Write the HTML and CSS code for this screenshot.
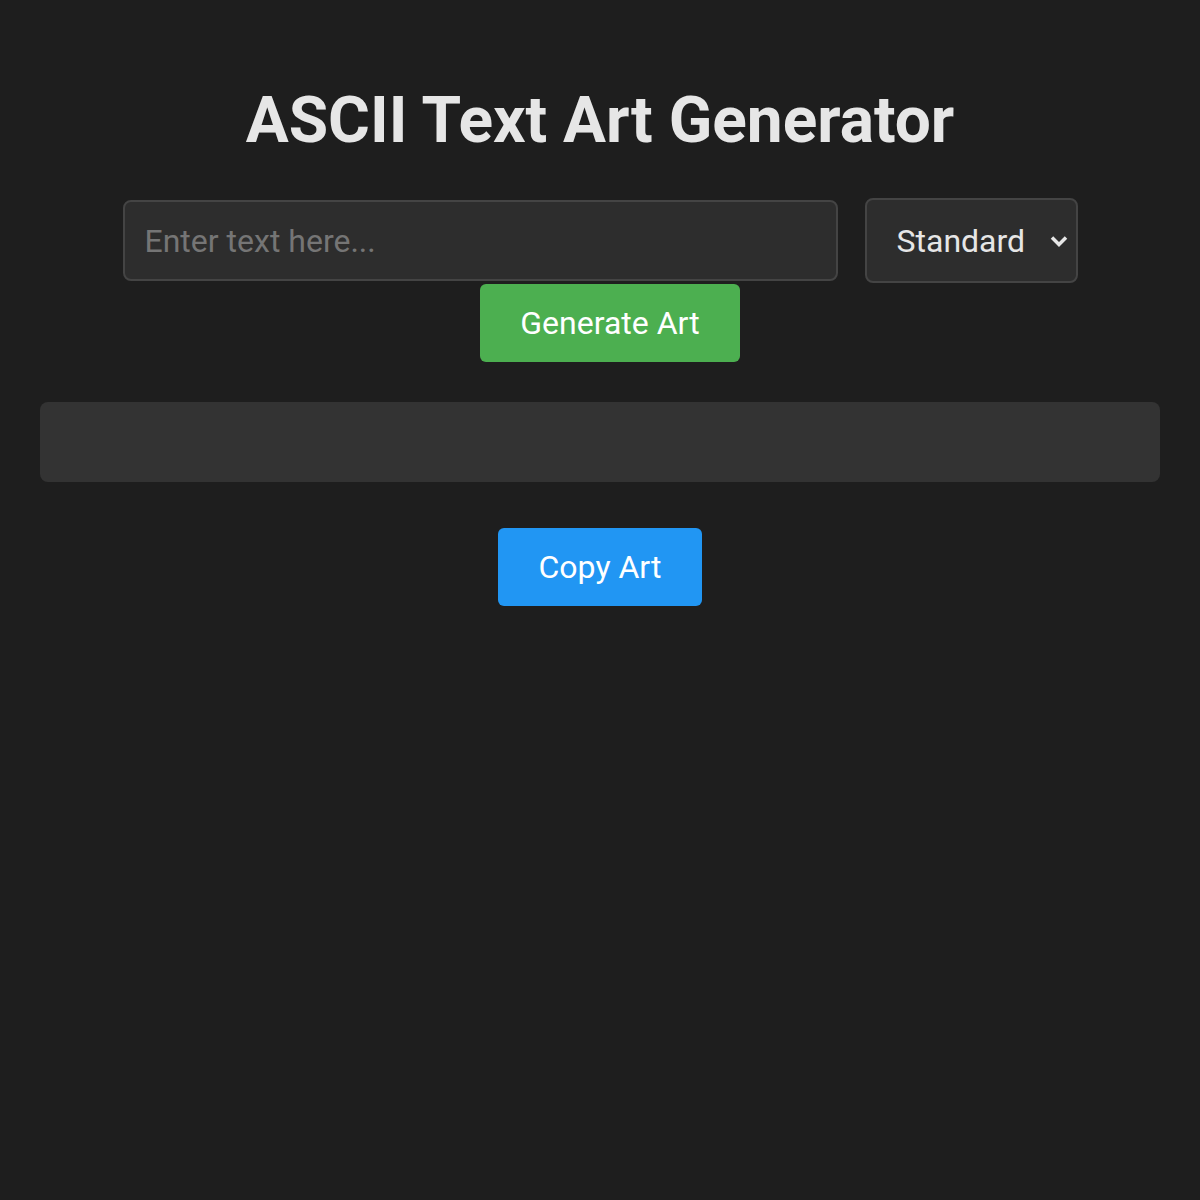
FILE: index.html
```html
<!DOCTYPE html>
<html lang="en">
<head>
    <meta charset="UTF-8">
    <meta name="viewport" content="width=device-width, initial-scale=1.0">
    <link rel="stylesheet" href="styles.css">
    <title>ASCII Text Art Generator</title>
</head>
<body>
    <div class="container">
        <h1>ASCII Text Art Generator</h1>
        <div class="controls">
            <input type="text" id="textInput" placeholder="Enter text here...">
            <select id="fontSelect">
                <option value="standard">Standard</option>
                <option value="banner">Banner</option>
                <option value="block">Block</option>
            </select>
            <button class="gen" onclick="generateArt()">Generate Art</button>
        </div>
        <pre id="output" class="output"></pre>
        <button class="copy" onclick="copyArt()">Copy Art</button>
    </div>

    <script>
        function generateArt() {
            const text = document.getElementById('textInput').value;
            document.getElementById('output').textContent = text;
        }
        function copyArt() {
            navigator.clipboard.writeText(document.getElementById('output').textContent);
        }
    </script>
</body>
</html>
```

FILE: styles.css
```css
body {
    margin: 0;
    padding: 40px;
    background-color: #1e1e1e;
    color: #e6e6e6;
    font-family: Roboto, "Liberation Sans", sans-serif;
}
.container {
    display: flex;
    flex-direction: column;
    align-items: center;
}
h1 {
    font-size: 64px;
    font-weight: 700;
    margin: 43px 0 40px 0;
    color: #e6e6e6;
}
.controls {
    display: flex;
    flex-wrap: wrap;
    justify-content: center;
    align-items: center;
    column-gap: 27px;
    row-gap: 1px;
    width: 100%;
}
.controls input {
    box-sizing: border-box;
    width: 715px;
    height: 81px;
    padding: 0 20px;
    font-family: Roboto, "Liberation Sans", sans-serif;
    font-size: 32px;
    color: #e6e6e6;
    background-color: #2d2d2d;
    border: 2px solid #444;
    border-radius: 8px;
    outline: none;
}
.controls input::placeholder {
    color: #757575;
}
.controls select {
    box-sizing: border-box;
    width: 213px;
    height: 85px;
    padding: 0 30px;
    font-family: Roboto, "Liberation Sans", sans-serif;
    font-size: 32px;
    color: #e6e6e6;
    background-color: #2d2d2d;
    background-image: url("data:image/svg+xml;utf8,<svg xmlns='http://www.w3.org/2000/svg' width='20' height='14' viewBox='0 0 20 14'><path d='M3 3.5 L10 10.5 L17 3.5' fill='none' stroke='%23e6e6e6' stroke-width='3.5'/></svg>");
    background-repeat: no-repeat;
    background-position: right 7px center;
    border: 2px solid #444;
    border-radius: 8px;
    appearance: none;
    -webkit-appearance: none;
}
.gen, .copy {
    height: 78px;
    border: none;
    border-radius: 6px;
    color: #fff;
    font-family: Roboto, "Liberation Sans", sans-serif;
    font-size: 32px;
    cursor: pointer;
}
.gen {
    width: 260px;
    margin-left: 20px;
    background-color: #4caf50;
}
.copy {
    width: 204px;
    margin-top: 46px;
    background-color: #2196f3;
}
.output {
    box-sizing: border-box;
    width: 100%;
    min-height: 80px;
    margin: 40px 0 0 0;
    padding: 20px;
    background-color: #333;
    border-radius: 8px;
    font-family: "DejaVu Sans Mono", monospace;
    color: #e6e6e6;
}
```
